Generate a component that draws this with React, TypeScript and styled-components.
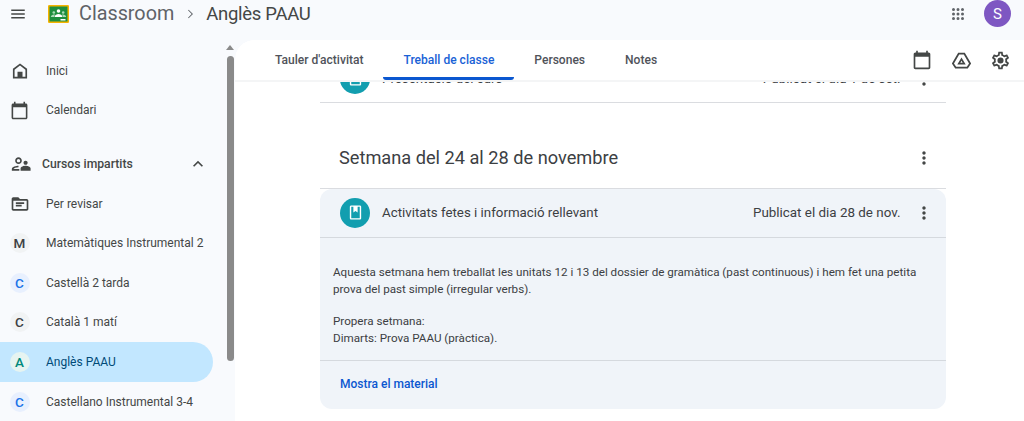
import React from 'react';
import styled, { createGlobalStyle } from 'styled-components';

const GlobalStyle = createGlobalStyle`
  html, body {
    margin: 0;
    padding: 0;
    background: #f8fafd;
    overflow: hidden;
  }
  * {
    box-sizing: border-box;
  }
`;

const Page = styled.div`
  width: 1024px;
  height: 421px;
  display: flex;
  flex-direction: column;
  overflow: hidden;
  background: #f8fafd;
  font-family: Roboto, "Liberation Sans", sans-serif;
  color: #444746;
`;

const Header = styled.header`
  height: 40px;
  flex: none;
  display: flex;
  align-items: flex-start;
  padding: 0 13px 0 9px;
`;

const MenuButton = styled.div`
  width: 18px;
  height: 28px;
  display: flex;
  align-items: center;
  justify-content: center;
  margin-right: 21px;
`;

const Logo = styled.div`
  width: 21px;
  height: 18px;
  margin-top: 5px;
  margin-right: 10px;
`;

const Crumb = styled.span`
  font-size: 19.8px;
  line-height: 28px;
  font-weight: 400;
  color: #5f6368;
`;

const CrumbCurrent = styled(Crumb)`
  font-size: 18.5px;
  letter-spacing: -0.3px;
  color: #444746;
`;

const Chevron = styled.div`
  width: 32px;
  height: 28px;
  display: flex;
  align-items: center;
  justify-content: center;
`;

const HeaderRight = styled.div`
  margin-left: auto;
  display: flex;
  align-items: center;
  gap: 17px;
`;

const Avatar = styled.div`
  width: 27px;
  height: 27px;
  border-radius: 50%;
  background: #7e57c2;
  color: #fff;
  font-size: 15px;
  display: flex;
  align-items: center;
  justify-content: center;
`;

const Body = styled.div`
  flex: 1;
  min-height: 0;
  display: flex;
`;

const Sidebar = styled.aside`
  width: 235px;
  flex: none;
  display: flex;
  overflow: hidden;
`;

const Nav = styled.nav`
  width: 225px;
  flex: none;
  padding: 11px 12px 0 0;
`;

const NavItem = styled.div<{ $active?: boolean; $section?: boolean }>`
  height: 39.6px;
  display: flex;
  align-items: center;
  border-radius: 0 20px 20px 0;
  font-size: ${p => (p.$section ? '12.2px' : '12px')};
  font-weight: ${p => (p.$section ? 500 : 400)};
  background: ${p => (p.$active ? '#c2e7ff' : 'transparent')};
  color: ${p => (p.$active ? '#004a77' : '#444746')};
  margin-top: ${p => (p.$section ? '14px' : '0')};
  white-space: nowrap;
`;

const NavIcon = styled.div<{ $section?: boolean }>`
  width: ${p => (p.$section ? '42px' : '46px')};
  padding-right: ${p => (p.$section ? '0' : '7px')};
  flex: none;
  display: flex;
  align-items: center;
  justify-content: center;
`;

const NavChevron = styled.div`
  margin-left: auto;
  margin-right: 5px;
  display: flex;
`;

const Letter = styled.div<{ $bg: string; $fg: string }>`
  width: 20px;
  height: 20px;
  border-radius: 50%;
  background: ${p => p.$bg};
  color: ${p => p.$fg};
  font-size: 13.5px;
  font-weight: 500;
  display: flex;
  align-items: center;
  justify-content: center;
`;

const ScrollTrack = styled.div`
  width: 10px;
  flex: none;
  display: flex;
  flex-direction: column;
  align-items: center;
  padding-top: 5px;
`;

const ScrollArrow = styled.div`
  width: 0;
  height: 0;
  border-left: 4px solid transparent;
  border-right: 4px solid transparent;
  border-bottom: 5px solid #8a8a8a;
  margin-bottom: 6px;
`;

const ScrollThumb = styled.div`
  width: 7px;
  height: 305px;
  border-radius: 4px;
  background: #8a8a8a;
`;

const Main = styled.main`
  flex: 1;
  min-width: 0;
  display: flex;
  flex-direction: column;
  background: #fff;
  border-top-left-radius: 20px;
  overflow: hidden;
`;

const TabBar = styled.div`
  height: 40px;
  flex: none;
  display: flex;
  align-items: stretch;
  padding: 0 13px 0 20px;
  background: #fff;
  box-shadow: 0 2px 0 #f4f5f6;
  position: relative;
  z-index: 1;
`;

const Tab = styled.div<{ $active?: boolean }>`
  padding: 0 20px;
  display: flex;
  align-items: center;
  font-size: 12.05px;
  font-weight: 500;
  color: ${p => (p.$active ? '#1a62d6' : '#50535a')};
  border-bottom: 3px solid ${p => (p.$active ? '#0b57d0' : 'transparent')};
  border-top: 3px solid transparent;
  border-radius: 0 0 3px 3px;
  white-space: nowrap;
`;

const TabActions = styled.div`
  margin-left: auto;
  display: flex;
  align-items: center;
  gap: 18px;
`;

const CalendarSlot = styled.div`
  display: flex;
  margin-right: 1px;
`;

const Content = styled.div`
  flex: 1;
  min-height: 0;
  overflow: hidden;
  padding: 0 78px 0 85px;
`;

const TopicRow = styled.div`
  height: 48px;
  margin-top: -25px;
  display: flex;
  align-items: center;
  padding: 0 12px 0 20px;
  border-bottom: 1px solid #dadce0;
  font-size: 13.3px;
  color: #3c4043;
`;

const TopicTitle = styled.span`
  margin-left: 12px;
  flex: 1;
`;

const TopicDate = styled.span`
  margin-right: 13.500px;
  font-size: 13.4px;
  white-space: nowrap;
`;

const Round = styled.div`
  width: 30px;
  height: 30px;
  border-radius: 50%;
  background: #129eaf;
  display: flex;
  align-items: center;
  justify-content: center;
  flex: none;
`;

const WeekHeading = styled.div`
  height: 86px;
  display: flex;
  align-items: center;
  padding: 24px 12px 0 19px;
  border-bottom: 1px solid #dadce0;
  font-size: 18.2px;
  color: #3c4043;
`;

const WeekTitle = styled.span`
  flex: 1;
`;

const MoreDots = styled.div`
  display: flex;
`;

const Card = styled.section`
  background: #f0f4f9;
  border-radius: 12px;
  overflow: hidden;
`;

const CardHead = styled.div`
  height: 49px;
  display: flex;
  align-items: center;
  padding: 0 12px 1px 20px;
  border-bottom: 1px solid #d5d9de;
  font-size: 13.3px;
  color: #3c4043;
`;

const CardBody = styled.div`
  height: 123px;
  padding: 26px 12px 0 13px;
  font-size: 11.65px;
  line-height: 16.5px;
  color: #3c4043;
  border-bottom: 1px solid #d5d9de;
`;

const Paragraph = styled.p`
  margin: 0 0 16px;
`;

const CardFoot = styled.div`
  height: 48px;
  display: flex;
  align-items: center;
  padding: 0 0 2px 20px;
  font-size: 12px;
  font-weight: 500;
  color: #0b57d0;
`;

const Material = ({ d, size = 20, fill = '#444746' }: { d: string; size?: number; fill?: string }) => (
  <svg width={size} height={size} viewBox="0 0 24 24" fill={fill}>
    <path d={d} fillRule="evenodd" />
  </svg>
);

const ICONS = {
  menu: 'M3 18h18v-2H3v2zm0-5h18v-2H3v2zm0-7v2h18V6H3z',
  home: 'M12 3 3.500 9.400V21h17V9.400L12 3zm0 2.500 6.500 4.900V19h-13v-8.600L12 5.500zM9 13h6v6H9z',
  calendar: 'M20 3h-1V1h-2v2H7V1H5v2H4c-1.100 0-2 .9-2 2v16c0 1.100.9 2 2 2h16c1.100 0 2-.9 2-2V5c0-1.100-.9-2-2-2zm0 18H4V8h16v13z',
  teaching: 'M9 12c2.200 0 4-1.800 4-4s-1.800-4-4-4-4 1.800-4 4 1.800 4 4 4zm0-6c1.100 0 2 .9 2 2s-.9 2-2 2-2-.9-2-2 .9-2 2-2zM3 18c.2-.7 3.300-2 6-2v-2c-2.700 0-8 1.300-8 4v2h9v-2H3zM17.500 14c-2 0-6 1-6 3v3h12v-3c0-2-4-3-6-3zM17.500 13c1.400 0 2.500-1.100 2.500-2.500S18.900 8 17.500 8 15 9.100 15 10.500s1.100 2.500 2.500 2.500z',
  review: 'M20 6h-8l-2-2H4c-1.100 0-2 .9-2 2v12c0 1.100.9 2 2 2h16c1.100 0 2-.9 2-2V8c0-1.100-.9-2-2-2zm0 12H4V8h16v10zM7 10h10v2H7v-2zm0 3h7v2H7v-2z',
  up: 'M12 8l-6 6 1.410 1.410L12 10.830l4.590 4.580L18 14z',
  right: 'M9 17.500 14.500 12 9 6.500l1-1 6.500 6.500-6.500 6.500z',
  more: 'M12 8c1.100 0 2-.9 2-2s-.9-2-2-2-2 .9-2 2 .9 2 2 2zm0 2c-1.100 0-2 .9-2 2s.9 2 2 2 2-.9 2-2-.9-2-2-2zm0 6c-1.100 0-2 .9-2 2s.9 2 2 2 2-.9 2-2-.9-2-2-2z',
  apps: 'M6 8a2 2 0 1 0 0-4 2 2 0 0 0 0 4zm6 12a2 2 0 1 0 0-4 2 2 0 0 0 0 4zm-6 0a2 2 0 1 0 0-4 2 2 0 0 0 0 4zm0-6a2 2 0 1 0 0-4 2 2 0 0 0 0 4zm6 0a2 2 0 1 0 0-4 2 2 0 0 0 0 4zm4-8a2 2 0 1 0 4 0 2 2 0 0 0-4 0zm-4 2a2 2 0 1 0 0-4 2 2 0 0 0 0 4zm6 6a2 2 0 1 0 0-4 2 2 0 0 0 0 4zm0 6a2 2 0 1 0 0-4 2 2 0 0 0 0 4z',
  drive: 'M8.200 3h7.600L23 15.500 19.200 21H4.800L1 15.500 8.200 3zm1.200 2L3.400 15.400 5.900 19h12.200l2.500-3.600L14.600 5H9.400zM12 8.500l4.800 8H7.200l4.800-8zm0 3.900-1.300 2.100h2.600L12 12.400z',
  settings: 'M19.430 12.980c.04-.32.07-.64.07-.98 0-.34-.03-.66-.07-.98l2.110-1.650c.19-.15.24-.42.12-.64l-2-3.460c-.09-.16-.26-.25-.44-.25-.06 0-.12.01-.17.03l-2.490 1c-.52-.4-1.080-.73-1.690-.98l-.38-2.650C14.460 2.180 14.250 2 14 2h-4c-.25 0-.46.18-.49.42l-.38 2.650c-.61.25-1.170.59-1.690.98l-2.490-1c-.06-.02-.12-.03-.18-.03-.17 0-.34.09-.43.25l-2 3.460c-.13.22-.07.49.12.64l2.110 1.650c-.04.32-.07.65-.07.98 0 .33.03.66.07.98l-2.110 1.650c-.19.15-.24.42-.12.64l2 3.460c.09.16.26.25.44.25.06 0 .12-.01.17-.03l2.490-1c.52.4 1.080.73 1.690.98l.38 2.650c.03.24.24.42.49.42h4c.25 0 .46-.18.49-.42l.38-2.650c.61-.25 1.170-.59 1.690-.98l2.490 1c.06.02.12.03.18.03.17 0 .34-.09.43-.25l2-3.460c.12-.22.07-.49-.12-.64l-2.110-1.650zm-1.980-1.710c.04.31.05.52.05.73 0 .21-.02.43-.05.73l-.14 1.130.89.7 1.080.84-.7 1.210-1.270-.51-1.040-.42-.9.68c-.43.32-.84.56-1.250.73l-1.060.43-.16 1.130-.2 1.350h-1.400l-.19-1.350-.16-1.130-1.060-.43c-.43-.18-.83-.41-1.230-.71l-.91-.7-1.060.43-1.270.51-.7-1.210 1.080-.84.89-.7-.14-1.130c-.03-.31-.05-.54-.05-.74s.02-.43.05-.73l.14-1.130-.89-.7-1.080-.84.7-1.210 1.270.51 1.040.42.9-.68c.43-.32.84-.56 1.250-.73l1.060-.43.16-1.130.2-1.350h1.390l.19 1.350.16 1.130 1.060.43c.43.18.83.41 1.230.71l.91.7 1.060-.43 1.270-.51.7 1.210-1.070.85-.89.7.14 1.130zM12 8.500a3.500 3.500 0 1 0 0 7 3.500 3.500 0 0 0 0-7z',
  book: 'M18 2H6c-1.100 0-2 .9-2 2v16c0 1.100.9 2 2 2h12c1.100 0 2-.9 2-2V4c0-1.100-.9-2-2-2zm0 18H6V4h3v8l3-2 3 2V4h3v16z',
};

const ClassroomLogo = () => (
  <svg width="21" height="18" viewBox="0 0 21 18">
    <rect x="0.750" y="0.750" width="19.500" height="16.500" rx="0.500" fill="#1e8e3e" stroke="#f5b400" strokeWidth="1.500" />
    <circle cx="10.500" cy="6" r="1.800" fill="#fff" />
    <circle cx="5.800" cy="7.500" r="1.300" fill="#a8dab5" />
    <circle cx="15.200" cy="7.500" r="1.300" fill="#a8dab5" />
    <path d="M6.500 12c0-2 2.500-3 4-3s4 1 4 3z" fill="#fff" />
    <path d="M2.800 12c0-1.500 1.800-2.600 3-2.600.6 0 1 .1 1.300.3-.6.6-1 1.400-1 2.300zM18.200 12c0-1.500-1.800-2.600-3-2.600-.6 0-1 .1-1.300.3.600.6 1 1.400 1 2.300z" fill="#a8dab5" />
    <rect x="12.500" y="14" width="5" height="1.500" fill="#fff" />
  </svg>
);

interface Course {
  letter: string;
  name: string;
  bg: string;
  fg: string;
  active?: boolean;
}

const courses: Course[] = [
  { letter: 'M', name: 'Matemàtiques Instrumental 2', bg: '#f1f3f4', fg: '#3c4043' },
  { letter: 'C', name: 'Castellà 2 tarda', bg: '#e8f0fe', fg: '#1a73e8' },
  { letter: 'C', name: 'Català 1 matí', bg: '#f1f3f4', fg: '#3c4043' },
  { letter: 'A', name: 'Anglès PAAU', bg: '#e6f4f1', fg: '#00897b', active: true },
  { letter: 'C', name: 'Castellano Instrumental 3-4', bg: '#e8f0fe', fg: '#1a73e8' },
];

function App() {
  return (
    <Page>
      <GlobalStyle />
      <Header>
        <MenuButton><Material d={ICONS.menu} size={20} /></MenuButton>
        <Logo><ClassroomLogo /></Logo>
        <Crumb>Classroom</Crumb>
        <Chevron><Material d={ICONS.right} size={16} fill="#5f6368" /></Chevron>
        <CrumbCurrent>Anglès PAAU</CrumbCurrent>
        <HeaderRight>
          <Material d={ICONS.apps} size={18} fill="#5f6368" />
          <Avatar>S</Avatar>
        </HeaderRight>
      </Header>
      <Body>
        <Sidebar>
          <Nav>
            <NavItem><NavIcon><Material d={ICONS.home} /></NavIcon>Inici</NavItem>
            <NavItem><NavIcon><Material d={ICONS.calendar} size={19} /></NavIcon>Calendari</NavItem>
            <NavItem $section>
              <NavIcon $section><Material d={ICONS.teaching} /></NavIcon>
              Cursos impartits
              <NavChevron><Material d={ICONS.up} /></NavChevron>
            </NavItem>
            <NavItem><NavIcon><Material d={ICONS.review} /></NavIcon>Per revisar</NavItem>
            {courses.map(c => (
              <NavItem key={c.name} $active={c.active}>
                <NavIcon><Letter $bg={c.bg} $fg={c.fg}>{c.letter}</Letter></NavIcon>
                {c.name}
              </NavItem>
            ))}
          </Nav>
          <ScrollTrack>
            <ScrollArrow />
            <ScrollThumb />
          </ScrollTrack>
        </Sidebar>
        <Main>
          <TabBar>
            <Tab>Tauler d'activitat</Tab>
            <Tab $active>Treball de classe</Tab>
            <Tab>Persones</Tab>
            <Tab>Notes</Tab>
            <TabActions>
              <CalendarSlot><Material d={ICONS.calendar} size={20} /></CalendarSlot>
              <Material d={ICONS.drive} size={21} />
              <Material d={ICONS.settings} size={21} />
            </TabActions>
          </TabBar>
          <Content>
            <TopicRow>
              <Round><Material d={ICONS.book} size={17} fill="#fff" /></Round>
              <TopicTitle>Presentació del curs</TopicTitle>
              <TopicDate>Publicat el dia 1 de set.</TopicDate>
              <MoreDots><Material d={ICONS.more} size={20} /></MoreDots>
            </TopicRow>
            <WeekHeading>
              <WeekTitle>Setmana del 24 al 28 de novembre</WeekTitle>
              <MoreDots><Material d={ICONS.more} size={20} /></MoreDots>
            </WeekHeading>
            <Card>
              <CardHead>
                <Round><Material d={ICONS.book} size={17} fill="#fff" /></Round>
                <TopicTitle>Activitats fetes i informació rellevant</TopicTitle>
                <TopicDate>Publicat el dia 28 de nov.</TopicDate>
                <MoreDots><Material d={ICONS.more} size={20} /></MoreDots>
              </CardHead>
              <CardBody>
                <Paragraph>
                  Aquesta setmana hem treballat les unitats 12 i 13 del dossier de gramàtica (past continuous) i hem fet una petita
                  <br />
                  prova del past simple (irregular verbs).
                </Paragraph>
                <Paragraph>
                  Propera setmana:
                  <br />
                  Dimarts: Prova PAAU (pràctica).
                </Paragraph>
              </CardBody>
              <CardFoot>Mostra el material</CardFoot>
            </Card>
          </Content>
        </Main>
      </Body>
    </Page>
  );
}

export default App;
